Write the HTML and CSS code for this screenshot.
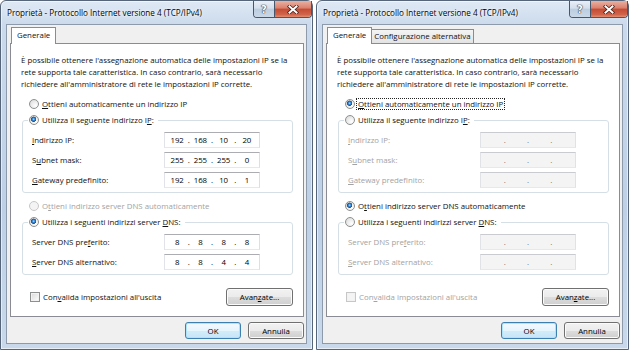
FILE: index.html
```html
<!DOCTYPE html>
<html lang="it">
<head>
    <meta charset="UTF-8">
    <meta name="viewport" content="width=device-width, initial-scale=1.0">
    <title>Proprietà - Protocollo Internet versione 4 (TCP/IPv4)</title>
    <link rel="stylesheet" href="styles.css">
</head>
<body>
<div class="screen">

    <!-- static configuration -->
    <div class="dialog">
        <div class="titlebar">
            <span class="title">Proprietà - Protocollo Internet versione 4 (TCP/IPv4)</span>
            <div class="caption">
                <span class="cap-help">?</span>
                <span class="cap-close">
                    <svg width="12" height="9" viewBox="0 0 12 9"><path d="M2.5 1.5 L9.5 7.5 M9.5 1.5 L2.5 7.5" stroke="#4a2018" stroke-width="3.6" stroke-linecap="square"/><path d="M2.5 1.5 L9.5 7.5 M9.5 1.5 L2.5 7.5" stroke="#fff" stroke-width="2" stroke-linecap="square"/></svg>
                </span>
            </div>
        </div>
        <div class="client">
            <div class="tabs">
                <span class="tab active">Generale</span>
            </div>
            <div class="panel">
                <p class="intro">È possibile ottenere l'assegnazione automatica delle impostazioni IP se la<br>rete supporta tale caratteristica. In caso contrario, sarà necessario<br>richiedere all'amministratore di rete le impostazioni IP corrette.</p>

                <div class="opt"><span class="rb"></span><span><u>O</u>ttieni automaticamente un indirizzo IP</span></div>
                <fieldset class="group">
                    <legend><span class="rb on"></span><span>Utilizza il seguente indirizzo I<u>P</u>:</span></legend>
                    <div class="rows">
                        <div class="field"><span class="lbl"><u>I</u>ndirizzo IP:</span><div class="ip"><span>192</span><i>.</i><span>168</span><i>.</i><span>10</span><i>.</i><span>20</span></div></div>
                        <div class="field"><span class="lbl">S<u>u</u>bnet mask:</span><div class="ip"><span>255</span><i>.</i><span>255</span><i>.</i><span>255</span><i>.</i><span>0</span></div></div>
                        <div class="field"><span class="lbl"><u>G</u>ateway predefinito:</span><div class="ip"><span>192</span><i>.</i><span>168</span><i>.</i><span>10</span><i>.</i><span>1</span></div></div>
                    </div>
                </fieldset>

                <div class="opt off"><span class="rb"></span><span>O<u>t</u>tieni indirizzo server DNS automaticamente</span></div>
                <fieldset class="group">
                    <legend><span class="rb on"></span><span>Utilizza i seguenti indirizzi server <u>D</u>NS:</span></legend>
                    <div class="rows">
                        <div class="field"><span class="lbl">Server DNS pre<u>f</u>erito:</span><div class="ip"><span>8</span><i>.</i><span>8</span><i>.</i><span>8</span><i>.</i><span>8</span></div></div>
                        <div class="field"><span class="lbl"><u>S</u>erver DNS alternativo:</span><div class="ip"><span>8</span><i>.</i><span>8</span><i>.</i><span>4</span><i>.</i><span>4</span></div></div>
                    </div>
                </fieldset>

                <div class="panel-foot">
                    <div class="check"><span class="cb"></span><span>Con<u>v</u>alida impostazioni all'uscita</span></div>
                    <button class="btn wide">Avan<u>z</u>ate...</button>
                </div>
            </div>
            <div class="actions">
                <button class="btn default">OK</button>
                <button class="btn">Annulla</button>
            </div>
        </div>
    </div>

    <!-- automatic configuration -->
    <div class="dialog">
        <div class="titlebar">
            <span class="title">Proprietà - Protocollo Internet versione 4 (TCP/IPv4)</span>
            <div class="caption">
                <span class="cap-help">?</span>
                <span class="cap-close">
                    <svg width="12" height="9" viewBox="0 0 12 9"><path d="M2.5 1.5 L9.5 7.5 M9.5 1.5 L2.5 7.5" stroke="#4a2018" stroke-width="3.6" stroke-linecap="square"/><path d="M2.5 1.5 L9.5 7.5 M9.5 1.5 L2.5 7.5" stroke="#fff" stroke-width="2" stroke-linecap="square"/></svg>
                </span>
            </div>
        </div>
        <div class="client">
            <div class="tabs">
                <span class="tab active">Generale</span>
                <span class="tab">Configurazione alternativa</span>
            </div>
            <div class="panel">
                <p class="intro">È possibile ottenere l'assegnazione automatica delle impostazioni IP se la<br>rete supporta tale caratteristica. In caso contrario, sarà necessario<br>richiedere all'amministratore di rete le impostazioni IP corrette.</p>

                <div class="opt"><span class="rb on"></span><span class="focus"><u>O</u>ttieni automaticamente un indirizzo IP</span></div>
                <fieldset class="group">
                    <legend><span class="rb"></span><span>Utilizza il seguente indirizzo I<u>P</u>:</span></legend>
                    <div class="rows off">
                        <div class="field"><span class="lbl"><u>I</u>ndirizzo IP:</span><div class="ip"><span></span><i>.</i><span></span><i>.</i><span></span><i>.</i><span></span></div></div>
                        <div class="field"><span class="lbl">S<u>u</u>bnet mask:</span><div class="ip"><span></span><i>.</i><span></span><i>.</i><span></span><i>.</i><span></span></div></div>
                        <div class="field"><span class="lbl"><u>G</u>ateway predefinito:</span><div class="ip"><span></span><i>.</i><span></span><i>.</i><span></span><i>.</i><span></span></div></div>
                    </div>
                </fieldset>

                <div class="opt"><span class="rb on"></span><span>O<u>t</u>tieni indirizzo server DNS automaticamente</span></div>
                <fieldset class="group">
                    <legend><span class="rb"></span><span>Utilizza i seguenti indirizzi server <u>D</u>NS:</span></legend>
                    <div class="rows off">
                        <div class="field"><span class="lbl">Server DNS pre<u>f</u>erito:</span><div class="ip"><span></span><i>.</i><span></span><i>.</i><span></span><i>.</i><span></span></div></div>
                        <div class="field"><span class="lbl"><u>S</u>erver DNS alternativo:</span><div class="ip"><span></span><i>.</i><span></span><i>.</i><span></span><i>.</i><span></span></div></div>
                    </div>
                </fieldset>

                <div class="panel-foot">
                    <div class="check off"><span class="cb"></span><span>Con<u>v</u>alida impostazioni all'uscita</span></div>
                    <button class="btn wide">Avan<u>z</u>ate...</button>
                </div>
            </div>
            <div class="actions">
                <button class="btn default">OK</button>
                <button class="btn">Annulla</button>
            </div>
        </div>
    </div>

</div>
</body>
</html>
```

FILE: styles.css
```css
* {
    box-sizing: border-box;
}
body {
    margin: 0;
    background: #fff;
    font-family: "Open Sans", "Noto Sans", sans-serif;
    font-size: 7.85px;
    color: #111;
}
u {
    text-decoration-thickness: 1px;
    text-underline-offset: 1px;
}
.screen {
    display: flex;
    gap: 3px;
    width: 629px;
    height: 350px;
}

/* window frame */
.dialog {
    width: 313px;
    height: 350px;
    display: flex;
    flex-direction: column;
    padding: 0 5px 5px;
    border: 1px solid #56657a;
    border-radius: 6px 6px 0 0;
    background: linear-gradient(180deg, #dfe9f5 0, #cbdaec 24px, #bdd0e6 60%, #c9d9eb 100%);
    box-shadow: inset 0 0 0 1px rgba(255, 255, 255, 0.55);
}
.titlebar {
    display: flex;
    justify-content: space-between;
    height: 23px;
}
.title {
    padding: 6px 0 0 1px;
    font-size: 8.15px;
    color: #000;
    text-shadow: 0 0 5px #fff, 0 0 2px #fff;
    white-space: nowrap;
}
.caption {
    display: flex;
    height: 17px;
    margin-right: -5px;
    border: 1px solid #47566a;
    border-top: 0;
    border-radius: 0 0 4px 4px;
    overflow: hidden;
}
.cap-help {
    width: 21px;
    display: flex;
    align-items: center;
    justify-content: center;
    border-right: 1px solid #47566a;
    background: linear-gradient(180deg, #e9eff6 0, #d3dfec 45%, #bccde0 50%, #cad8e8 100%);
    color: #fff;
    font: bold 10px "DejaVu Sans", sans-serif;
    text-shadow: 0 0 1px #2b3a4d, 0 0 1px #2b3a4d, 0 0 1px #2b3a4d;
}
.cap-close {
    width: 36px;
    display: flex;
    align-items: center;
    justify-content: center;
    background: linear-gradient(180deg, #eab0a2 0, #d9806b 45%, #c64a33 50%, #d0654b 85%, #e28d70 100%);
}

/* client area */
.client {
    flex: 1;
    display: flex;
    flex-direction: column;
    background: #f0f0f0;
    border: 1px solid #8c9aac;
    padding: 2px 2px 0 3px;
}
.tabs {
    display: flex;
    align-items: flex-end;
    height: 16px;
    padding-left: 1px;
}
.tab {
    height: 14px;
    padding: 1px 2px 0;
    margin-left: -1px;
    border: 1px solid #898c95;
    border-bottom: 0;
    background: linear-gradient(180deg, #f4f4f4, #e3e3e3);
    white-space: nowrap;
}
.tab.active {
    height: 17px;
    margin-left: 0;
    margin-bottom: -1px;
    padding: 2px 5px 0;
    background: #fff;
    position: relative;
    z-index: 1;
}
.panel {
    background: #fff;
    border: 1px solid #898c95;
    padding: 10px 10px 10px 10px;
}
.intro {
    margin: 0;
    line-height: 12px;
    white-space: nowrap;
}

/* radio buttons and check boxes */
.opt {
    display: flex;
    align-items: center;
    height: 14px;
    margin: 7px 0 0 8px;
    white-space: nowrap;
}
.rb {
    width: 10px;
    height: 10px;
    margin-right: 3px;
    flex: none;
    border: 1px solid #8e8f8f;
    border-radius: 50%;
    background: radial-gradient(circle at 70% 70%, #ffffff 0, #eeeeee 45%, #d4d4d4 100%);
}
.rb.on {
    background: radial-gradient(circle at 45% 40%, #b9e2fa 0, #3b8ad6 1.2px, #1a4f8f 2.4px, rgba(0, 0, 0, 0) 2.9px),
        radial-gradient(circle at 70% 70%, #ffffff 0, #eeeeee 45%, #d4d4d4 100%);
}
.off {
    color: #a3a3a3;
}
.off .rb,
.off .cb {
    border-color: #c7c7c7;
    background: #f4f4f4;
}
.focus {
    outline: 1px dotted #222;
    padding: 0 1px;
    margin-left: -1px;
}
.check {
    display: flex;
    align-items: center;
    margin-left: 9px;
    white-space: nowrap;
}
.cb {
    width: 10px;
    height: 10px;
    margin-right: 3px;
    border: 1px solid #8e8f8f;
    background: linear-gradient(135deg, #d9d9d9, #ffffff);
    box-shadow: inset 0 0 0 1px #f2f2f2;
}

/* group boxes */
.group {
    margin: 2px 0 0 1px;
    padding: 5px 0 4px 9px;
    border: 1px solid #d5dfe5;
    border-radius: 3px;
    min-width: 0;
}
.group legend {
    display: flex;
    align-items: center;
    height: 14px;
    margin-left: -4px;
    padding: 0 4px 0 1px;
    white-space: nowrap;
}
.opt + .group {
    margin-top: 2px;
}
.group + .opt {
    margin-top: 6px;
}
.rows {
    display: flex;
    flex-direction: column;
    gap: 4px;
}
.field {
    display: flex;
    align-items: center;
    height: 16px;
}
.lbl {
    width: 132px;
    white-space: nowrap;
}
.ip {
    width: 96px;
    height: 16px;
    display: flex;
    align-items: center;
    padding: 0 3px;
    border: 1px solid;
    border-color: #abadb3 #dbdfe6 #e3e9ef #e2e3ea;
    background: #fff;
    color: #000;
}
.ip span {
    flex: 1;
    text-align: center;
}
.ip i {
    width: 5px;
    font-style: normal;
    text-align: center;
}
.rows.off .ip {
    border-color: #c9cbd0 #e0e2e5 #e6e8eb #e0e2e5;
    background: #f4f4f4;
    color: #6f6f6f;
}

/* buttons */
.panel-foot {
    display: flex;
    justify-content: space-between;
    align-items: center;
    margin-top: 13px;
}
.btn {
    height: 17px;
    padding: 0;
    border: 1px solid #707070;
    border-radius: 3px;
    background: linear-gradient(180deg, #f2f2f2 0, #ebebeb 50%, #dddddd 50%, #cfcfcf 100%);
    box-shadow: inset 0 0 0 1px #fbfbfb;
    font: inherit;
    color: #000;
}
.btn.wide {
    width: 67px;
    height: 18px;
}
.actions {
    display: flex;
    justify-content: flex-end;
    gap: 7px;
    margin-top: 5px;
}
.actions .btn {
    width: 56px;
}
.btn.default {
    border-color: #3c7fb1;
    background: linear-gradient(180deg, #f3fafe 0, #e6f4fc 50%, #d3ecfa 50%, #c6e5f7 100%);
    box-shadow: inset 0 0 0 1px #aee3fb;
}
```
